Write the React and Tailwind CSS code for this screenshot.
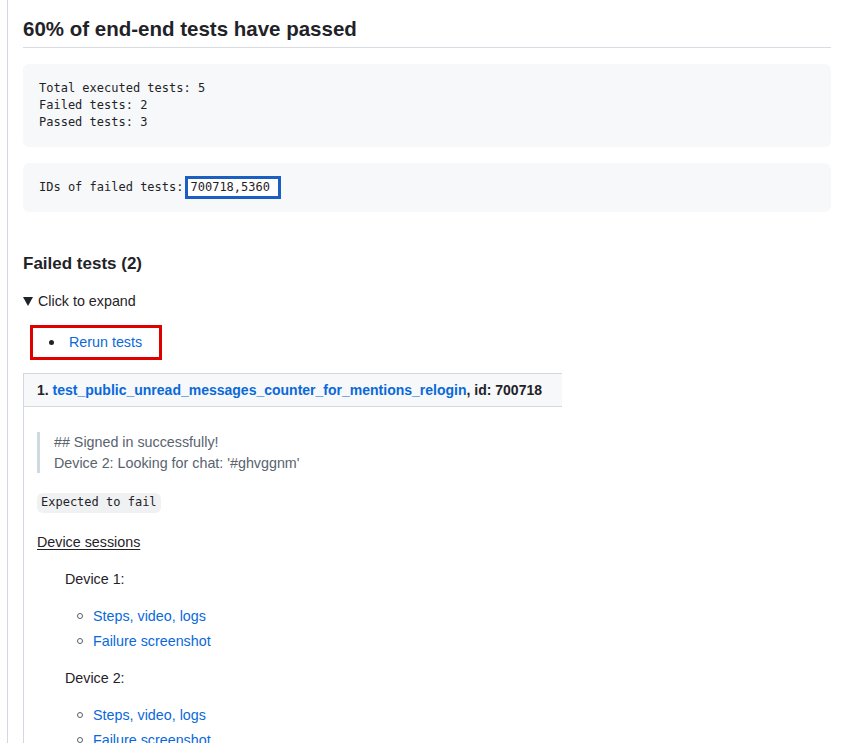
const sans = { fontFamily: '"Liberation Sans", Arial, sans-serif' };

function Circle() {
  return <span className="inline-block h-[6px] w-[6px] shrink-0 rounded-full border border-[#57606a]" />;
}

function LinkItem({ children, first }) {
  return (
    <div className={`flex items-center pl-[40px] ${first ? 'mt-4' : 'mt-1'}`}>
      <Circle />
      <a href="#" className="ml-[10px] leading-[21px] text-[#0969da]">
        {children}
      </a>
    </div>
  );
}

function Device({ name }) {
  return (
    <>
      <p className="mt-4 pl-[28px] leading-[21px]">{name}</p>
      <LinkItem first>Steps, video, logs</LinkItem>
      <LinkItem>Failure screenshot</LinkItem>
    </>
  );
}

export default function App() {
  const mono = 'font-["DejaVu_Sans_Mono",monospace]';
  return (
    <div className="h-[743px] overflow-hidden bg-white text-[14.3px] text-[#1f2328]" style={sans}>
      <div className="ml-[7px] h-full border-l border-[#d1d9e0] pl-[15px] pr-[15px] pt-4">
        <h2 className="border-b border-[#d8dce2] pb-[6px] text-[20.5px] font-bold leading-[25px]">
          60% of end-end tests have passed
        </h2>

        <pre className={`mt-4 rounded-md bg-[#f6f8fa] p-4 text-[12px] leading-[17px] ${mono}`}>
          {'Total executed tests: 5\nFailed tests: 2\nPassed tests: 3'}
        </pre>

        <div className={`mt-4 rounded-md bg-[#f6f8fa] p-4 text-[12px] leading-[17px] ${mono}`}>
          <div className="flex h-[17px] items-center whitespace-pre">
            <span>IDs of failed tests:</span>
            <span className="ml-[1px] border-[3px] border-[#1c5fc2] bg-white pl-[3px] pr-[8px] leading-[17px]">
              700718,5360
            </span>
          </div>
        </div>

        <h3 className="mt-[41px] text-[17px] font-bold leading-[21px]">Failed tests (2)</h3>

        <div className="mt-[17px] flex items-center leading-[21px]">
          <svg width="10" height="9" viewBox="0 0 10 9" className="shrink-0">
            <polygon points="0,0 10,0 5,9" fill="#1f2328" />
          </svg>
          <span className="ml-[5px]">Click to expand</span>
        </div>

        <div className="ml-[7px] mt-[13px] flex w-[132px] items-center border-[3px] border-[#e00000] py-1 pl-[16px]">
          <span className="inline-block h-[5px] w-[5px] shrink-0 rounded-full bg-[#1f2328]" />
          <a href="#" className="ml-[15px] leading-[21px] text-[#0969da]">
            Rerun tests
          </a>
        </div>

        <div className="mt-[13px] w-[539px]">
          <div className="flex h-[34px] items-center whitespace-nowrap border-y border-l border-[#d1d9e0] bg-[#f6f8fa] px-[13px] text-[14px] font-bold">
            <span>1.&nbsp;</span>
            <a href="#" className="text-[#0969da]">
              test_public_unread_messages_counter_for_mentions_relogin
            </a>
            <span>, id: 700718</span>
          </div>
          <div className="border-l border-[#d1d9e0] pb-10 pl-[13px] pt-[25px]">
            <blockquote className="border-l-[3px] border-[#d1d9e0] pl-[14px] leading-[20.5px] text-[#59636e]">
              <p>## Signed in successfully!</p>
              <p>Device 2: Looking for chat: '#ghvggnm'</p>
            </blockquote>

            <div className="mt-[18px]">
              <code className={`inline-block rounded-md bg-[#eff1f3] px-1 py-[2.5px] text-[12px] leading-[15px] ${mono}`}>
                Expected to fail
              </code>
            </div>

            <p className="mt-[19px] leading-[21px] underline underline-offset-2">Device sessions</p>

            <Device name="Device 1:" />
            <Device name="Device 2:" />
          </div>
        </div>
      </div>
    </div>
  );
}
